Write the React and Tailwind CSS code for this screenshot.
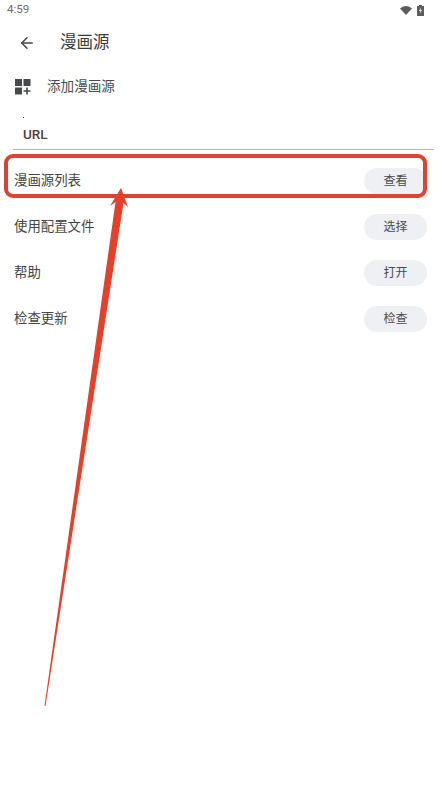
import { ArrowLeft } from "lucide-react";

const rows = [
  { label: "漫画源列表", action: "查看" },
  { label: "使用配置文件", action: "选择" },
  { label: "帮助", action: "打开" },
  { label: "检查更新", action: "检查" },
];

const cjk = "font-['Roboto','Noto_Sans_CJK_SC',sans-serif]";

function StatusBar() {
  return (
    <div className="flex h-5 items-center justify-between pl-[7px] pr-[23px]">
      <span className="text-[11.5px] text-[#6b6b6b]">4:59</span>
      <div className="flex items-center gap-[5px]">
        <svg width="12" height="9" viewBox="0 0 12 9">
          <path d="M0 2.600C3.400-.8 8.600-.8 12 2.600L6 9z" fill="#5c5c5c" />
        </svg>
        <svg width="7" height="11" viewBox="0 0 7 11">
          <path d="M2 0h3v1h2v10H0V1h2z" fill="#5c5c5c" />
          <path d="M3.800 2.500 2 6h1.200v2.500L5 5H3.800z" fill="#e8e8e8" />
        </svg>
      </div>
    </div>
  );
}

function Annotation() {
  return (
    <>
      <div className="absolute left-[4px] top-[154px] h-[44px] w-[423px] rounded-[9px] border-[4px] border-[#de4330]" />
      <svg className="absolute left-0 top-0" width="447" height="796" viewBox="0 0 447 796">
        <path
          d="M121 188 128 207 123.500 203 45.500 706 44.500 706 115.500 202 110 206z"
          fill="#e5412a"
        />
      </svg>
    </>
  );
}

export default function App() {
  return (
    <div className={`relative h-[796px] w-[447px] overflow-hidden bg-white ${cjk}`}>
      <StatusBar />

      <div className="flex h-[43px] items-center pl-[18px] pt-[3px]">
        <ArrowLeft size={18} strokeWidth={2} className="text-[#444746]" />
        <h1 className="ml-[24px] text-[16.5px] font-normal text-[#3a3a3a]">漫画源</h1>
      </div>

      <div className="mt-[3px] flex h-[40px] items-center pl-[15px] pt-[1px]">
        <svg width="16" height="16" viewBox="0 0 16 16" fill="#45484c">
          <rect x="0" y="0" width="7" height="7" />
          <rect x="8.500" y="0" width="7" height="7" />
          <rect x="0" y="8.500" width="7" height="7" />
          <path d="M11.200 8.500h1.600v2.700h2.700v1.600h-2.700v2.700h-1.600v-2.700H8.500v-1.600h2.700z" />
        </svg>
        <span className="ml-[16px] text-[13.6px] text-[#4a4a4a]">添加漫画源</span>
      </div>

      <div className="relative mx-[13px] mt-[7px] flex h-[37px] items-center border-b border-[#b4b4b4] pl-[10px] pt-[7px]">
        <span className="absolute left-[10px] top-[4px] h-[1px] w-[1px] bg-[#333]" />
        <span className="text-[13.5px] font-medium text-[#444]">URL</span>
      </div>

      <div className="mt-[8px] flex flex-col">
        {rows.map((row) => (
          <div key={row.label} className="flex h-[46px] items-center justify-between pl-[14px] pr-[20px]">
            <span className="text-[13.4px] text-[#444]">{row.label}</span>
            <button className="flex h-[26px] w-[63px] items-center justify-center rounded-full bg-[#eff0f3] text-[12px] text-[#4a4a4a]">
              {row.action}
            </button>
          </div>
        ))}
      </div>

      <Annotation />
    </div>
  );
}
